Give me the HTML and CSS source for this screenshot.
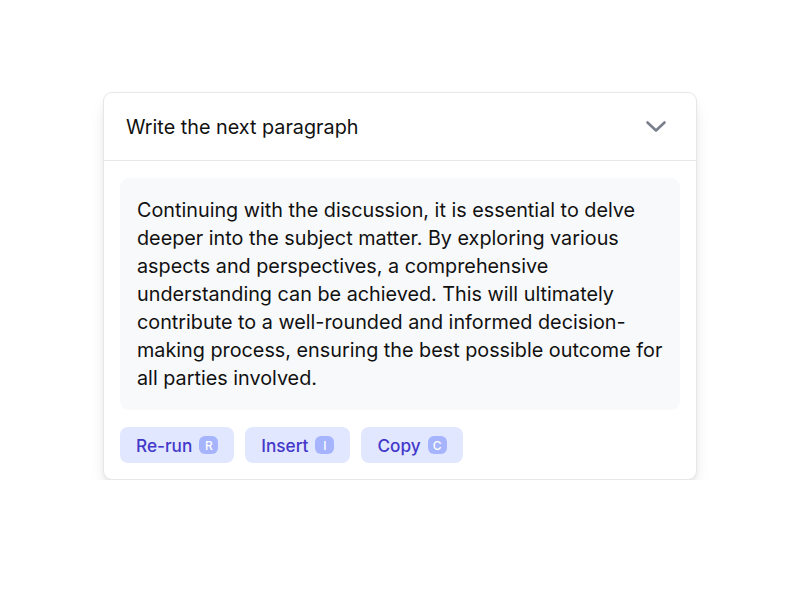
FILE: index.html
```html
<!DOCTYPE html>
<html>
<head>
<meta charset="utf-8">
<link rel="stylesheet" href="styles.css">
</head>
<body>
<div class="page">
  <div class="card">
    <div class="card-header">
      <span class="title">Write the next paragraph</span>
      <svg class="chevron" width="24" height="24" viewBox="0 0 24 24" fill="none" stroke="currentColor" stroke-width="2.6" stroke-linecap="round" stroke-linejoin="round"><path d="M3.5 7.5l8.5 8 8.5-8"/></svg>
    </div>
    <div class="card-body">
      <div class="output">Continuing with the discussion, it is essential to delve deeper into the subject matter. By exploring various aspects and perspectives, a comprehensive understanding can be achieved. This will ultimately contribute to a well-rounded and informed decision-making process, ensuring the best possible outcome for all parties involved.</div>
      <div class="actions">
        <button class="btn">Re-run <span class="kbd">R</span></button>
        <button class="btn">Insert <span class="kbd">I</span></button>
        <button class="btn">Copy <span class="kbd">C</span></button>
      </div>
    </div>
  </div>
</div>
</body>
</html>
```
FILE: styles.css
```css
* { box-sizing: border-box; }
html, body { margin: 0; padding: 0; background: #fff; }
body { font-family: Inter, "Noto Sans", sans-serif; color: #111827; }
.page { padding: 92px 0 0 103px; }
.card {
  width: 594px;
  background: #fff;
  border: 1px solid #e5e7eb;
  border-radius: 9px;
  box-shadow: 0 10px 18px -4px rgba(0,0,0,0.12), 0 3px 6px -2px rgba(0,0,0,0.08);
}
.card-header {
  height: 68px;
  display: flex;
  align-items: center;
  justify-content: space-between;
  padding: 0 28px 0 22px;
  border-bottom: 1px solid #e5e7eb;
}
.title { font-size: 19.8px; color: #111; }
.chevron { color: #7b7f8c; }
.card-body { padding: 17px 16px 16px 16px; }
.output {
  background: #f8f9fb;
  border-radius: 9px;
  padding: 18px 17px;
  font-size: 19.8px;
  line-height: 28px;
  color: #111;
}
.actions { display: flex; gap: 11px; margin-top: 17px; }
.btn {
  font-family: inherit;
  border: 0;
  height: 36px;
  background: #e0e7ff;
  color: #4338ca;
  font-size: 17.2px;
  font-weight: 500;
  border-radius: 8px;
  padding: 0 16px;
  display: flex;
  align-items: center;
  gap: 7px;
}
.kbd {
  width: 19px;
  height: 18px;
  border-radius: 6px;
  background: #a5b4fc;
  color: #fff;
  font-size: 12px;
  font-weight: 500;
  display: inline-flex;
  align-items: center;
  justify-content: center;
}
```
